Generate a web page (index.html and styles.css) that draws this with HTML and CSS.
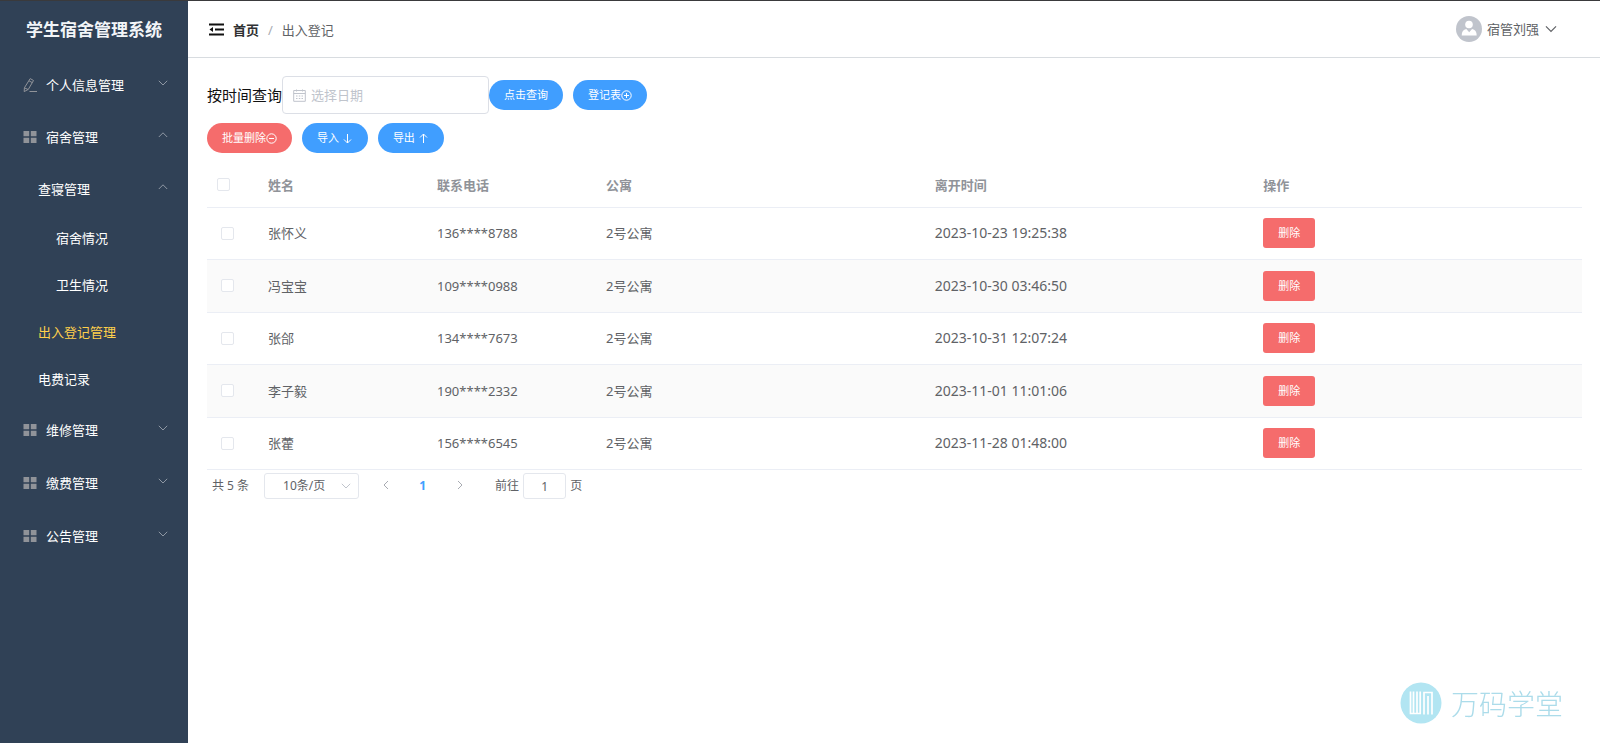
FILE: index.html
```html
<!DOCTYPE html>
<html lang="zh-CN">
<head>
<meta charset="utf-8">
<title>学生宿舍管理系统</title>
<link rel="stylesheet" href="styles.css">
</head>
<body>
<svg class="defs" aria-hidden="true">
  <symbol id="down" viewBox="0 0 10 10"><path d="M.8 2.8 5 7l4.200-4.200"/></symbol>
  <symbol id="up" viewBox="0 0 10 10"><path d="M.8 7 5 2.800 9.200 7"/></symbol>
  <symbol id="grid" viewBox="0 0 14 14"><path d="M.5 1h5.700v5.300H.5zM7.800 1h5.700v5.300H7.800zM.5 7.700h5.700V13H.5zM7.800 7.700h5.700V13H7.800z"/></symbol>
</svg>
<div class="app">
  <aside class="sidebar">
    <h1 class="brand">学生宿舍管理系统</h1>
    <nav class="menu">
      <button class="item" type="button"><svg class="icon pen" viewBox="0 0 14 14"><path d="M7.200.6 10.500 2.500 5.300 11.400 1.200 13.600 1.400 9.800zM6 2.800l3.200 1.800M1.400 9.800l3.800 1.800M6.500 13.500H14"/></svg><span>个人信息管理</span><svg class="chev"><use href="#down"/></svg></button>
      <button class="item" type="button"><svg class="icon"><use href="#grid"/></svg><span>宿舍管理</span><svg class="chev"><use href="#up"/></svg></button>
      <button class="item second" type="button"><span>查寝管理</span><svg class="chev"><use href="#up"/></svg></button>
      <a class="leaf third" href="#">宿舍情况</a>
      <a class="leaf third" href="#">卫生情况</a>
      <a class="leaf active" href="#">出入登记管理</a>
      <a class="leaf" href="#">电费记录</a>
      <button class="item" type="button"><svg class="icon"><use href="#grid"/></svg><span>维修管理</span><svg class="chev"><use href="#down"/></svg></button>
      <button class="item" type="button"><svg class="icon"><use href="#grid"/></svg><span>缴费管理</span><svg class="chev"><use href="#down"/></svg></button>
      <button class="item" type="button"><svg class="icon"><use href="#grid"/></svg><span>公告管理</span><svg class="chev"><use href="#down"/></svg></button>
    </nav>
  </aside>
  <div class="page">
    <header class="header">
      <button class="fold" type="button" aria-label="收起菜单"><svg viewBox="0 0 15 13"><path d="M0 1.500h15M6 6.500h9M0 11.500h15" fill="none" stroke="#111" stroke-width="2"/><path d="M4 4v5L.5 6.500z" fill="#111"/></svg></button>
      <nav class="crumbs"><a href="#">首页</a><i>/</i><span>出入登记</span></nav>
      <button class="user" type="button">
        <svg class="avatar" viewBox="0 0 26 26"><circle cx="13" cy="13" r="13" fill="#c0c4cc"/><circle cx="13" cy="8.500" r="3.800" fill="#fff"/><path d="M5.700 19.500c0-3.800 1.600-5.700 4.600-6.500l2.900 3.200 2.900-3.200c3 .8 4.600 2.700 4.600 6.500z" fill="#fff"/></svg>
        <span>宿管刘强</span>
        <svg class="caret"><use href="#down"/></svg>
      </button>
    </header>
    <main class="content">
      <form class="bar">
        <label for="date">按时间查询</label>
        <div class="date">
          <svg viewBox="0 0 13 13"><path d="M.7 1.500h11.600v10.800H.7zM.7 4.500h11.600M3.500.5v2M9.500.5v2M3 7h1.500M5.800 7h1.500M8.500 7H10M3 9.500h1.500M5.800 9.500h1.500M8.500 9.500H10"/></svg>
          <input id="date" type="text" placeholder="选择日期">
        </div>
        <div class="group">
          <button class="btn" type="button">点击查询</button>
          <button class="btn" type="button">登记表<svg viewBox="0 0 11 11"><circle cx="5.500" cy="5.500" r="4.700"/><path d="M3 5.500h5M5.500 3v5"/></svg></button>
        </div>
      </form>
      <div class="group tools">
        <button class="btn danger" type="button">批量删除<svg viewBox="0 0 11 11"><circle cx="5.500" cy="5.500" r="4.700"/><path d="M3 5.500h5"/></svg></button>
        <button class="btn" type="button">导入&nbsp;<svg viewBox="0 0 11 11"><path d="M5.500 1v9M2 6.500 5.500 10 9 6.500"/></svg></button>
        <button class="btn" type="button">导出&nbsp;<svg viewBox="0 0 11 11"><path d="M5.500 10V1M2 4.500 5.500 1 9 4.500"/></svg></button>
      </div>
      <table class="table">
        <colgroup><col class="c-check"><col class="c-short"><col class="c-short"><col><col><col></colgroup>
        <thead><tr><th><input type="checkbox" aria-label="全选"></th><th>姓名</th><th>联系电话</th><th>公寓</th><th>离开时间</th><th>操作</th></tr></thead>
        <tbody>
          <tr><td><input type="checkbox" aria-label="选择张怀义"></td><td>张怀义</td><td>136****8788</td><td>2号公寓</td><td class="time">2023-10-23 19:25:38</td><td><button class="del" type="button">删除</button></td></tr>
          <tr><td><input type="checkbox" aria-label="选择冯宝宝"></td><td>冯宝宝</td><td>109****0988</td><td>2号公寓</td><td class="time">2023-10-30 03:46:50</td><td><button class="del" type="button">删除</button></td></tr>
          <tr><td><input type="checkbox" aria-label="选择张郃"></td><td>张郃</td><td>134****7673</td><td>2号公寓</td><td class="time">2023-10-31 12:07:24</td><td><button class="del" type="button">删除</button></td></tr>
          <tr><td><input type="checkbox" aria-label="选择李子毅"></td><td>李子毅</td><td>190****2332</td><td>2号公寓</td><td class="time">2023-11-01 11:01:06</td><td><button class="del" type="button">删除</button></td></tr>
          <tr><td><input type="checkbox" aria-label="选择张藿"></td><td>张藿</td><td>156****6545</td><td>2号公寓</td><td class="time">2023-11-28 01:48:00</td><td><button class="del" type="button">删除</button></td></tr>
        </tbody>
      </table>
      <div class="pager">
        <span>共 5 条</span>
        <div class="size"><select aria-label="每页条数"><option>10条/页</option></select><svg><use href="#down"/></svg></div>
        <div class="pages">
          <button type="button" aria-label="上一页"><svg viewBox="0 0 10 10"><path d="M7 1 3 5l4 4"/></svg></button>
          <button class="current" type="button">1</button>
          <button type="button" aria-label="下一页"><svg viewBox="0 0 10 10"><path d="M3 1l4 4-4 4"/></svg></button>
        </div>
        <div class="jump"><label for="goto">前往</label><input id="goto" type="text" value="1"><span>页</span></div>
      </div>
    </main>
  </div>
</div>
<div class="watermark">
  <svg viewBox="0 0 42 42"><circle cx="21" cy="21" r="20.500" fill="#b2e5f2"/><path d="M10.500 9.500v22h3v-22M17 9.500v22h3.200v-22M13.500 31.500H17M24 32.500V10.500h8v22M28 32.500V14" fill="none" stroke="#fff" stroke-width="1.700"/></svg>
  <span>万码学堂</span>
</div>
</body>
</html>
```
FILE: styles.css
```css
* { box-sizing: border-box; }
body {
  margin: 0;
  font: 13px/20px "Noto Sans", "Noto Sans CJK SC", sans-serif;
  color: #606266;
  background: #fff;
}
button, input, select { font: inherit; color: inherit; }
button { border: 0; padding: 0; background: none; cursor: pointer; }
a { text-decoration: none; color: inherit; }
svg { fill: none; stroke: currentColor; flex: none; }
.defs { display: none; }
.app { display: flex; min-height: 100vh; border-top: 1px solid #3a3a3c; }

.sidebar { width: 188px; flex: none; background: #304156; color: #fff; }
.brand { margin: 0; height: 58px; font-size: 17px; line-height: 58px; text-align: center; color: #f2f5f8; }
.menu { display: flex; flex-direction: column; }
.item { display: flex; align-items: center; gap: 9px; height: 52px; padding: 0 20px 0 23px; text-align: left; }
.item span { flex: 1; }
.icon { width: 14px; height: 14px; fill: #909399; stroke: none; }
.pen { fill: none; stroke: #909399; }
.chev { width: 10px; height: 10px; margin-bottom: 4px; stroke: #8f98a4; }
.second { padding-left: 38px; }
.leaf { height: 47px; line-height: 47px; padding-left: 38px; }
.leaf ~ .item { height: 53px; }
.third { padding-left: 56px; }
.active { color: #ffd04b; }

.page { flex: 1; min-width: 0; }
.header { display: flex; align-items: center; height: 57px; padding: 0 43px 0 21px; border-bottom: 1px solid #d8dce0; }
.fold { display: flex; width: 15px; margin-right: 9px; }
.fold svg { width: 15px; height: 13px; stroke: none; }
.crumbs { display: flex; flex: 1; padding-top: 2px; }
.crumbs a { font-weight: 700; color: #303133; }
.crumbs i { margin: 0 9px; font-style: normal; color: #a8abb2; }
.user { display: flex; align-items: center; gap: 5px; }
.avatar { width: 26px; height: 26px; stroke: none; }
.caret { width: 12px; height: 12px; margin-left: 1px; }

.content { padding: 18px 18px 18px 19px; }
.bar { display: flex; align-items: center; }
.bar label { font-size: 15px; color: #111; }
.date { display: flex; align-items: center; gap: 5px; width: 207px; height: 38px; padding: 0 10px; border: 1px solid #dcdfe6; border-radius: 4px; color: #c0c4cc; }
.date svg { width: 13px; height: 13px; }
.date input { flex: 1; min-width: 0; border: 0; padding: 0; outline: 0; background: none; }
.date input::placeholder { color: #c0c4cc; opacity: 1; }
.group { display: flex; gap: 10px; }
.btn { display: flex; align-items: center; height: 30px; padding: 0 15px; border-radius: 15px; background: #409eff; color: #fff; font-size: 11px; }
.btn svg { width: 11px; height: 11px; }
.danger { background: #f56c6c; }
.tools { padding: 9px 0; }

.table { width: 100%; border-collapse: separate; border-spacing: 0; table-layout: fixed; }
.c-check { width: 51px; }
.c-short { width: 169px; }
.table th, .table td { height: 52px; padding: 0 10px; border-bottom: 1px solid #ebeef5; text-align: left; }
.table td { padding-bottom: 1px; }
.table th { height: 46px; color: #909399; }
.table tr:nth-child(even) td { height: 53px; background: #fafafa; }
.table .time { font-size: 14px; }
.table input { appearance: none; display: block; width: 13px; height: 13px; margin: 0; border: 1px solid #e4e7ed; border-radius: 2px; background: #fff; }
.table td input { margin-left: 4px; }
.del { display: block; height: 30px; padding: 0 15px; border-radius: 3px; background: #f56c6c; color: #fff; font-size: 11px; }

.pager { display: flex; align-items: center; padding: 3px 5px; font-size: 12px; }
.size { display: flex; align-items: center; width: 95px; height: 26px; margin-left: 15px; padding-right: 7px; border: 1px solid #e4e7ed; border-radius: 3px; }
.size select { appearance: none; flex: 1; min-width: 0; height: 24px; padding: 0 0 0 18px; border: 0; background: none; }
.size svg { width: 10px; height: 10px; stroke: #c0c4cc; }
.pages { display: flex; margin: 0 17px 0 8px; }
.pages button { width: 37px; height: 26px; color: #a8abb2; }
.pages svg { width: 10px; height: 10px; }
.pages .current { font-weight: 700; color: #409eff; }
.jump { display: flex; align-items: center; gap: 4px; }
.jump input { width: 43px; height: 26px; padding: 0; border: 1px solid #e4e7ed; border-radius: 3px; text-align: center; }

.watermark { position: fixed; right: 37px; bottom: 19px; display: flex; align-items: center; gap: 9px; color: #acdcea; font: 300 28px/42px "Noto Sans CJK SC", sans-serif; }
.watermark svg { width: 42px; height: 42px; stroke: none; }
```
